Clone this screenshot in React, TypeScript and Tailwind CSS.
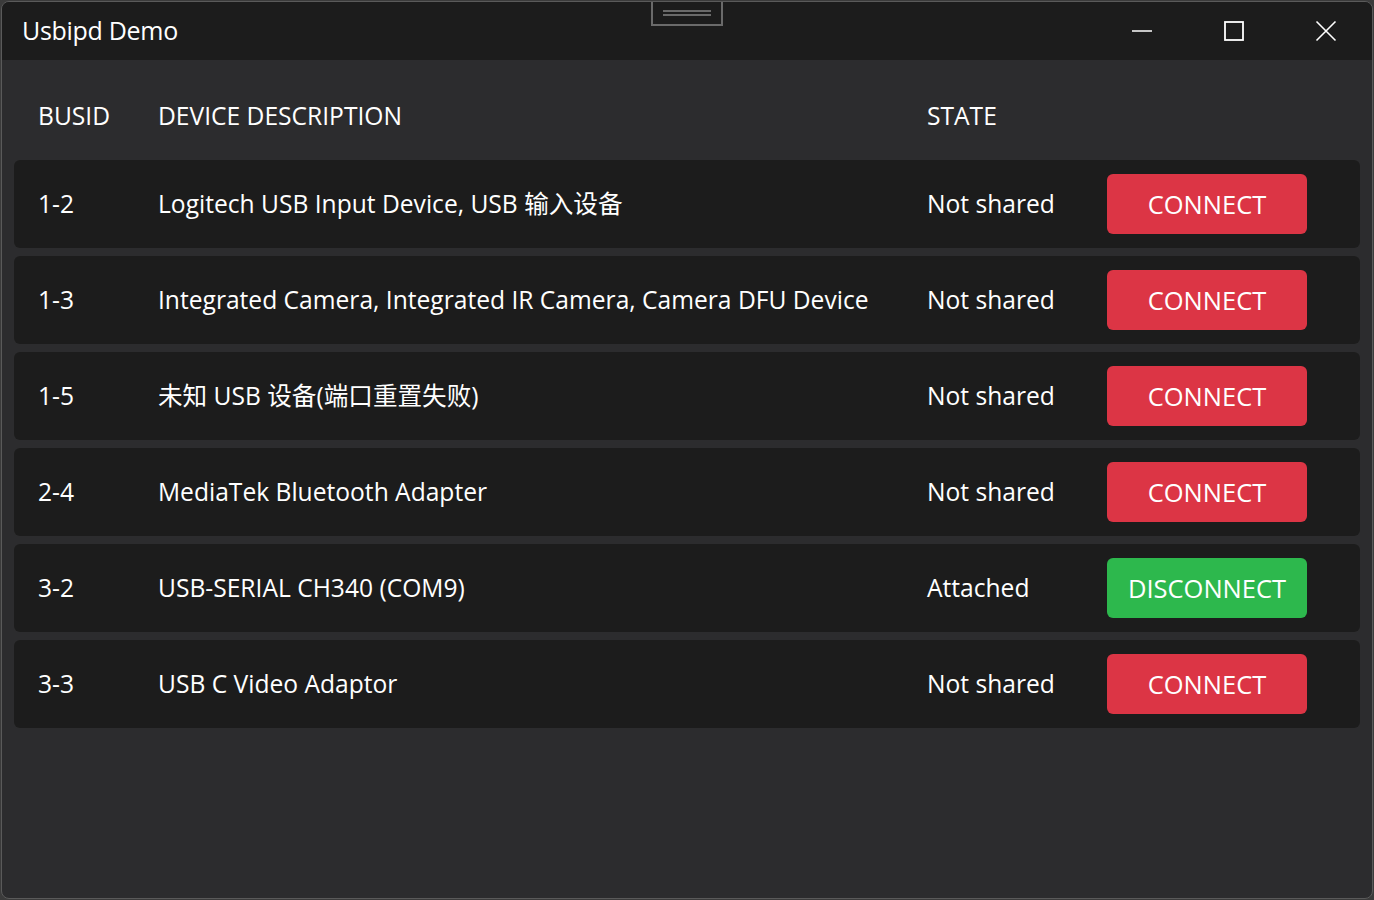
import React from "react";

type Device = {
  busid: string;
  description: string;
  state: string;
  attached: boolean;
};

const devices: Device[] = [
  { busid: "1-2", description: "Logitech USB Input Device, USB 输入设备", state: "Not shared", attached: false },
  { busid: "1-3", description: "Integrated Camera, Integrated IR Camera, Camera DFU Device", state: "Not shared", attached: false },
  { busid: "1-5", description: "未知 USB 设备(端口重置失败)", state: "Not shared", attached: false },
  { busid: "2-4", description: "MediaTek Bluetooth Adapter", state: "Not shared", attached: false },
  { busid: "3-2", description: "USB-SERIAL CH340 (COM9)", state: "Attached", attached: true },
  { busid: "3-3", description: "USB C Video Adaptor", state: "Not shared", attached: false },
];

const font = {
  fontFamily: '"Open Sans", "Noto Sans CJK SC", sans-serif',
};

export default function App() {
  return (
    <div className="h-[900px] w-[1374px] overflow-hidden bg-[#3b3b3b] text-white" style={font}>
      <div className="relative flex h-[898px] w-[1372px] flex-col overflow-hidden rounded-lg border border-[#5a5a5a] bg-[#2c2c2e] mt-[1px] ml-[1px]">
        {/* title bar */}
        <div className="flex h-[58px] items-center bg-[#1c1c1c]">
          <span className="pl-[20px] text-[25px] tracking-[-0.3px]">Usbipd Demo</span>
          <div className="ml-auto flex h-full items-center">
            <button className="flex h-full w-[92px] items-center justify-center">
              <svg width="22" height="22" viewBox="0 0 22 22">
                <line x1="1" y1="11" x2="21" y2="11" stroke="white" strokeWidth="1.6" />
              </svg>
            </button>
            <button className="flex h-full w-[92px] items-center justify-center">
              <svg width="22" height="22" viewBox="0 0 22 22">
                <rect x="2" y="2" width="18" height="18" fill="none" stroke="white" strokeWidth="1.8" />
              </svg>
            </button>
            <button className="flex h-full w-[92px] items-center justify-center">
              <svg width="22" height="22" viewBox="0 0 22 22">
                <path d="M1.5 1.5 L20.5 20.5 M20.5 1.5 L1.5 20.5" stroke="white" strokeWidth="1.6" />
              </svg>
            </button>
          </div>
        </div>

        {/* xaml toolbar handle */}
        <div className="absolute left-[649px] top-[-2px] flex h-[26px] w-[72px] flex-col items-center justify-center gap-[2px] border-2 border-[#6a6a6a] bg-[#1c1c1c]">
          <div className="h-[2px] w-[48px] bg-[#6a6a6a]" />
          <div className="h-[2px] w-[48px] bg-[#6a6a6a]" />
        </div>

        {/* header */}
        <div className="flex h-[100px] items-center px-[36px] pt-[12px] text-[24.6px]">
          <div className="w-[120px]">BUSID</div>
          <div className="w-[769px]">DEVICE DESCRIPTION</div>
          <div>STATE</div>
        </div>

        {/* rows */}
        <div className="flex flex-col gap-[8px] px-[12px]">
          {devices.map((d) => (
            <div key={d.busid} className="flex h-[88px] items-center rounded-md bg-[#1c1c1c] pl-[24px] text-[24.6px]">
              <div className="w-[120px]">{d.busid}</div>
              <div className="w-[769px] whitespace-nowrap">{d.description}</div>
              <div className="w-[180px]">{d.state}</div>
              <button
                className={
                  "flex h-[60px] w-[200px] items-center justify-center rounded-md text-[25.5px] " +
                  (d.attached ? "bg-[#2db84d]" : "bg-[#dc3545]")
                }
              >
                {d.attached ? "DISCONNECT" : "CONNECT"}
              </button>
            </div>
          ))}
        </div>
      </div>
    </div>
  );
}
